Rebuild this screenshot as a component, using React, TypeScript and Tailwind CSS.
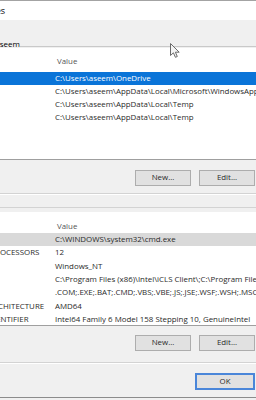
const userVars: [string, string][] = [
  ["OneDrive", "C:\\Users\\aseem\\OneDrive"],
  ["Path", "C:\\Users\\aseem\\AppData\\Local\\Microsoft\\WindowsApps;"],
  ["TEMP", "C:\\Users\\aseem\\AppData\\Local\\Temp"],
  ["TMP", "C:\\Users\\aseem\\AppData\\Local\\Temp"],
];

const systemVars: [string, string][] = [
  ["ComSpec", "C:\\WINDOWS\\system32\\cmd.exe"],
  ["NUMBER_OF_PROCESSORS", "12"],
  ["OS", "Windows_NT"],
  ["Path", "C:\\Program Files (x86)\\Intel\\iCLS Client\\;C:\\Program Files\\Intel\\iCLS Client\\;C:\\WINDOWS\\system32"],
  ["PATHEXT", ".COM;.EXE;.BAT;.CMD;.VBS;.VBE;.JS;.JSE;.WSF;.WSH;.MSC"],
  ["PROCESSOR_ARCHITECTURE", "AMD64"],
  ["PROCESSOR_IDENTIFIER", "Intel64 Family 6 Model 158 Stepping 10, GenuineIntel"],
];

function Button({ label }: { label: string }) {
  return (
    <div className="flex h-[16px] w-[56px] items-center justify-center border border-[#adadad] bg-[#e1e1e1] text-[#2b2b2b]">
      {label}
    </div>
  );
}

export default function App() {
  return (
    <div className="relative h-[400px] w-[256px] overflow-hidden bg-[#f0f0f0] font-['Open_Sans',Arial,sans-serif] text-[7.9px] leading-none text-[#2a2a2a]">
      {/* title bar, cut off on the left */}
      <div className="flex h-[20px] items-center border-t border-[#a3a3a3] bg-white">
        <div className="flex w-[5px] shrink-0 justify-end whitespace-nowrap text-[9px] text-black">Environment Variables</div>
      </div>

      {/* user variables */}
      <div className="flex h-[28px] items-end">
        <div className="flex h-[9px] w-full items-center">
          <div className="flex w-[20px] shrink-0 justify-end whitespace-nowrap text-[8px] text-black">User variables for aseem</div>
          <div className="mb-[1px] h-px flex-1 self-end bg-[#c9c9c9]" />
        </div>
      </div>

      <div className="ml-[-76px] h-[112px] w-[360px] overflow-hidden border-b border-[#9f9f9f] bg-white">
        <div className="flex h-[24px] items-center pt-[4px] text-[#555]">
          <div className="w-[128px] shrink-0 pl-[16px]">Name</div>
          <div className="pl-[5px]">Value</div>
        </div>
        {userVars.map(([name, value], i) => (
          <div
            key={i}
            className={`flex h-[13px] items-center whitespace-nowrap ${i === 0 ? "bg-[#0a74d8] text-white" : ""}`}
          >
            <div className="w-[128px] shrink-0 overflow-hidden pl-[16px]">{name}</div>
            <div className="pl-[3px]">{value}</div>
          </div>
        ))}
      </div>

      <div className="flex gap-[8px] pl-[135px] pt-[10px]">
        <Button label="New..." />
        <Button label="Edit..." />
      </div>
      <div className="mt-[7px] h-[2px] border-b border-white bg-[#d3d3d3]" />

      {/* system variables */}
      <div className="mt-[12px] h-px bg-[#d3d3d3]" />
      <div className="ml-[-76px] mt-[4px] h-[114px] w-[360px] overflow-hidden border-b border-[#9f9f9f] bg-white">
        <div className="flex h-[21px] items-center pt-[8px] text-[#555]">
          <div className="w-[128px] shrink-0 pl-[16px]">Variable</div>
          <div className="pl-[5px]">Value</div>
        </div>
        {systemVars.map(([name, value], i) => (
          <div key={i} className={`flex h-[13.4px] items-center whitespace-nowrap ${i === 0 ? "bg-[#d9d9d9]" : ""}`}>
            <div className="w-[128px] shrink-0 overflow-hidden pl-[16px]">{name}</div>
            <div className="pl-[3px]">{value}</div>
          </div>
        ))}
      </div>

      <div className="flex gap-[8px] pl-[135px] pt-[9px]">
        <Button label="New..." />
        <Button label="Edit..." />
      </div>
      <div className="mt-[11px] h-[2px] border-b border-white bg-[#d3d3d3]" />

      <div className="pl-[195px] pt-[9px]">
        <div className="flex h-[17px] w-[60px] items-center justify-center border-2 border-[#4a86d9] bg-[#e1e1e1] text-[#2b2b2b]">
          OK
        </div>
      </div>
      <div className="mt-[7px] h-px bg-[#8c8c8c]" />

      {/* mouse pointer */}
      <svg className="absolute left-[170px] top-[43px]" width="11" height="16" viewBox="0 0 11 16">
        <path d="M0.5 0.5 L0.5 12.5 L3.4 9.8 L5.4 14.3 L7.3 13.5 L5.4 9.2 L9.2 9.2 Z" fill="#f4f4f4" stroke="#6b6b6b" strokeWidth="1" strokeLinejoin="round" />
      </svg>
    </div>
  );
}
